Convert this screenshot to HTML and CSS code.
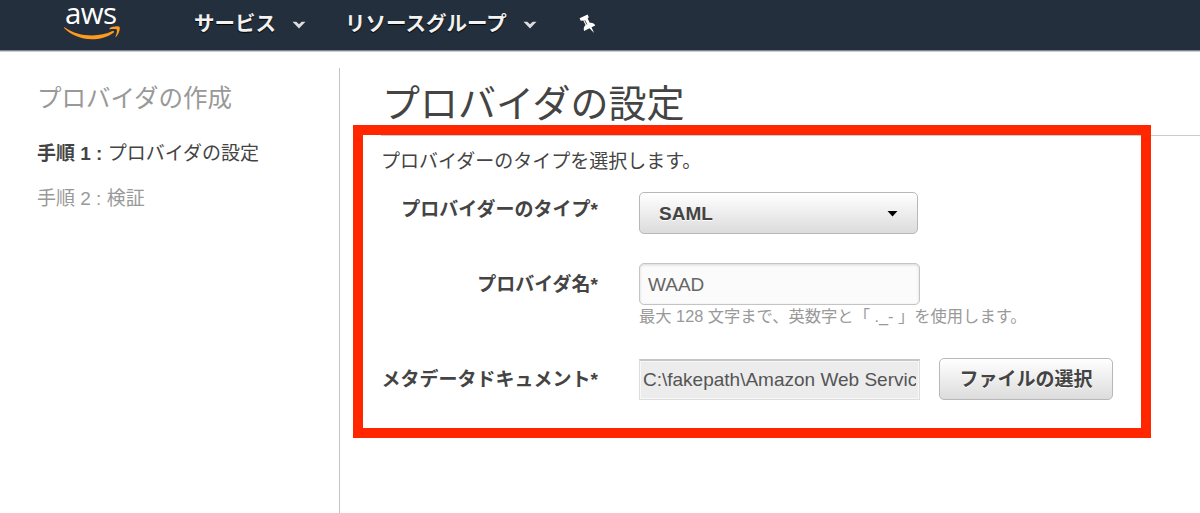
FILE: index.html
```html
<!DOCTYPE html>
<html lang="ja">
<head>
  <meta charset="UTF-8" />
  <meta name="viewport" content="width=device-width, initial-scale=1.0"/>
  <title>プロバイダの作成</title>
  <link rel="stylesheet" href="styles.css">
</head>
<body>
  <!-- Header -->
  <header class="navbar">
    <a class="logo">
      <span class="logo-text">aws</span>
      <svg class="logo-smile" viewBox="0 0 56 14" width="56" height="14">
        <path d="M.4 1.2C9 7 18 9.400 28 9.400c7.500 0 14.500-1.500 20.500-4.400 1.200-.5 2.100.8 1 1.700C43.500 11.200 35.500 13.300 27.500 13.300 17 13.300 7.500 9.200 .3 2.300c-.6-.6-.4-1.300.1-1.100z" fill="#ff9a1f"/>
        <path d="M45.600 2.200C48 .4 54.500-.3 55.500 1c.9 1.300-.4 7.200-3.300 9.800-.5.400-.9.200-.7-.4.800-1.800 2-5.700 1.300-6.700-.7-1-4.700-.7-6.700-.5-.6.100-.8-.5-.5-1z" fill="#ff9a1f"/>
      </svg>
    </a>
    <nav class="nav-menu">
      <a class="nav-item">サービス
        <svg class="chevron" viewBox="0 0 14 8" width="14" height="8"><path d="M.5 .8h3.800L7 3.300 9.700.8h3.800L7 7.500z" fill="#ddd"/></svg>
      </a>
      <a class="nav-item">リソースグループ
        <svg class="chevron" viewBox="0 0 14 8" width="14" height="8"><path d="M.5 .8h3.800L7 3.300 9.700.8h3.800L7 7.500z" fill="#ddd"/></svg>
      </a>
      <a class="nav-pin">
        <svg viewBox="0 0 17 20" width="17" height="20">
          <path d="M.6 4.200L8.600.6l1.200 2.600-1.200 1.300 2.200 4.300c2.500-.3 4.600.6 5.400 2.600l-3.700 1.900 2.600 5.800-4.600-4.800-5.400 2.600c-.8-2.100-.2-4.300 1.400-5.900L4.300 6.600 1.700 6.800z" fill="#fff"/>
          <path d="M5.800 6.200l2 4.200" stroke="#232f3c" stroke-width=".8" fill="none"/>
        </svg>
      </a>
    </nav>
  </header>

  <div class="page">
    <!-- Wizard steps -->
    <aside class="sidebar">
      <h2>プロバイダの作成</h2>
      <p class="step active"><b>手順 1 :</b> プロバイダの設定</p>
      <p class="step">手順 2 : 検証</p>
    </aside>

    <!-- Main Content -->
    <main class="content">
      <h1>プロバイダの設定</h1>
      <form class="provider-form">
        <p class="intro">プロバイダーのタイプを選択します。</p>
        <div class="form-row type-row">
          <label>プロバイダーのタイプ*</label>
          <button type="button" class="btn select-btn">SAML
            <svg viewBox="0 0 10 6" width="11" height="6"><path d="M0 0h10L5 5.500z" fill="#000"/></svg>
          </button>
        </div>
        <div class="form-row name-row">
          <label>プロバイダ名*</label>
          <div>
            <div class="text-input">WAAD</div>
            <p class="hint">最大 128 文字まで、英数字と「 ._- 」を使用します。</p>
          </div>
        </div>
        <div class="form-row file-row">
          <label>メタデータドキュメント*</label>
          <div class="file-path"><span>C:\fakepath\Amazon Web Servic</span></div>
          <button type="button" class="btn file-btn">ファイルの選択</button>
        </div>
        <div class="highlight"></div>
      </form>
    </main>
  </div>
</body>
</html>
```

FILE: styles.css
```css
* {
  margin: 0;
  padding: 0;
  box-sizing: border-box;
}

body {
  height: 513px;
  overflow: hidden;
  background-color: #fff;
  color: #444;
  font-family: "Liberation Sans", "Noto Sans CJK JP", sans-serif;
  font-size: 19px;
  line-height: 28px;
  white-space: nowrap;
}

.navbar {
  display: flex;
  height: 52px;
  background-color: #232f3c;
  border-bottom: 1px solid #c9ccd1;
  box-shadow: inset 0 -1px 0 #7d858f;
}

.logo {
  width: 194px;
  padding-left: 64px;
}

.logo-text {
  display: block;
  height: 26px;
  padding-left: 1px;
  color: #fff;
  font-family: "Open Sans", sans-serif;
  font-size: 29.5px;
  font-weight: 500;
  letter-spacing: -0.6px;
  line-height: 26px;
}

.logo-smile {
  display: block;
}

.nav-menu {
  display: flex;
  height: 48px;
  align-items: center;
}

.nav-item {
  display: flex;
  align-items: center;
  gap: 16px;
  margin-right: 39px;
  color: #f2f2f2;
  font-size: 20.5px;
  font-weight: bold;
  text-shadow: 0 1px 1px #000;
}

.chevron {
  margin-top: 2px;
}

.nav-pin {
  display: flex;
  margin-left: 3px;
}

.page {
  display: flex;
  height: 461px;
}

.sidebar {
  width: 340px;
  margin-top: 16px;
  padding: 13px 0 0 37px;
  border-right: 1px solid #c4c4c4;
}

.sidebar h2 {
  margin-bottom: 23px;
  color: #999;
  font-size: 24.5px;
  font-weight: normal;
  line-height: 36px;
}

.step {
  margin-bottom: 17px;
  color: #999;
}

.step.active {
  color: #444;
}

.content {
  flex: 1;
  padding-left: 41px;
}

.content h1 {
  height: 83px;
  padding: 22px 0 0 1px;
  font-size: 38px;
  font-weight: normal;
  line-height: 60px;
}

.provider-form {
  position: relative;
  border-top: 1px solid #ccc;
}

.intro {
  padding-top: 12px;
}

.form-row {
  display: flex;
}

.form-row label {
  width: 217px;
  margin-right: 41px;
  text-align: right;
  font-weight: bold;
}

.type-row {
  margin-top: 16px;
}

.type-row label {
  padding-top: 4px;
}

.btn {
  height: 42px;
  border: 1px solid #b8b8b8;
  border-radius: 5px;
  background: linear-gradient(#fff, #dcdcdc);
  color: #444;
  font: inherit;
  font-weight: bold;
  text-shadow: 0 1px 0 #fff;
}

.select-btn {
  display: flex;
  width: 279px;
  align-items: center;
  justify-content: space-between;
  padding: 1px 19px 0 19px;
}

.name-row {
  margin-top: 29px;
}

.name-row label {
  padding-top: 8px;
}

.text-input {
  width: 281px;
  height: 42px;
  padding: 7px 8px;
  border: 1px solid #c4c4c4;
  border-radius: 5px;
  background-color: #fbfbfb;
  box-shadow: inset 0 1px 3px rgba(0, 0, 0, 0.15);
  color: #666;
}

.hint {
  color: #999;
  font-size: 16.3px;
  line-height: 23px;
}

.file-row {
  margin-top: 30px;
}

.file-row label {
  padding-top: 8px;
}

.file-path {
  width: 281px;
  height: 41px;
  margin-top: 1px;
  padding: 5px 3px;
  border: 1px solid #ddd;
  border-top: 2px solid #c6c6c6;
  background-color: #ececec;
  box-shadow: inset 0 0 0 1px #f8f8f8;
  color: #555;
}

.file-path span {
  display: block;
  overflow: hidden;
}

.file-btn {
  width: 174px;
  margin-left: 19px;
  padding-top: 2px;
}

/* Red frame around the fields to fill in */
.highlight {
  position: absolute;
  top: -11px;
  left: -28px;
  width: 798px;
  height: 313px;
  border: 10px solid #ff2600;
}
```
